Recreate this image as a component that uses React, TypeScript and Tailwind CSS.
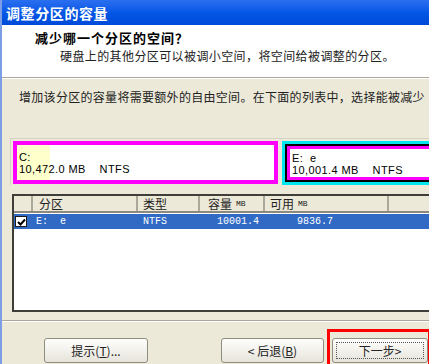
import React from 'react'

const cjk = { fontFamily: '"Noto Sans CJK SC", "Liberation Sans", sans-serif' }
const tahoma = { fontFamily: '"Liberation Sans", "Noto Sans CJK SC", sans-serif' }
const mono = { fontFamily: '"Liberation Mono", "Noto Sans CJK SC", monospace' }

function XpButton({ children, focus }: { children: React.ReactNode; focus?: boolean }) {
  return (
    <div className="flex h-[25px] w-full items-center justify-center rounded-[3px] border border-[#8f8d80] bg-gradient-to-b from-[#fefefd] to-[#e6e4da] p-[3px]">
      <div
        className={`flex h-full w-full items-center justify-center text-[12px] leading-none text-[#222] ${
          focus ? 'border border-dotted border-[#555]' : ''
        }`}
        style={cjk}
      >
        {children}
      </div>
    </div>
  )
}

export default function App() {
  return (
    <div className="h-[364px] w-[429px] overflow-hidden border-l-2 border-[#7c9ee6] bg-[#ece9d8]">
      {/* title bar */}
      <div className="flex h-[25px] items-center bg-gradient-to-b from-[#2b6ff0] via-[#0457e6] to-[#0049d8] pl-[4px]">
        <span className="text-[14px] font-bold leading-none tracking-[0.6px] text-white" style={cjk}>
          调整分区的容量
        </span>
      </div>

      {/* header */}
      <div className="h-[53px] border-b border-[#aca899] bg-white">
        <div className="pl-[33px] pt-[6px] text-[13px] font-bold leading-[14px] tracking-[1px] text-black" style={cjk}>
          减少哪一个分区的空间？
        </div>
        <div className="whitespace-nowrap pl-[58px] pt-[4px] text-[12px] leading-[14px] tracking-[0.4px] text-[#222]" style={cjk}>
          硬盘上的其他分区可以被调小空间，将空间给被调整的分区。
        </div>
      </div>
      <div className="h-px bg-white" />

      {/* body */}
      <div className="w-[480px]">
        <div className="whitespace-nowrap pl-[17px] pt-[11px] text-[12px] leading-[14px] tracking-[0.3px] text-[#222]" style={cjk}>
          增加该分区的容量将需要额外的自由空间。在下面的列表中，选择能被减少
        </div>

        {/* partition strip */}
        <div className="ml-[8px] mt-[34px] flex gap-[4px] border-l border-t border-[#d6d3c4] pl-[2px] pt-[2px]">
          <div className="h-[43px] w-[265px] border-4 border-[#ff00ff] bg-white">
            <div className="relative h-full w-full">
              <div className="absolute left-0 top-0 h-full w-[33px] bg-[#ffffcc]" />
              <div className="relative pl-[2px] pt-[6px] text-[11px] leading-[12px] tracking-[0.4px] text-black" style={tahoma}>
                <div>C:</div>
                <div className="whitespace-pre">10,472.0 MB    NTFS</div>
              </div>
            </div>
          </div>
          <div className="h-[44px] w-[200px] border-[3px] border-[#00e5ee]">
            <div className="h-full w-full border-2 border-black">
              <div className="h-full w-full border-[3px] border-[#ff00ff] bg-white pl-[2px] pt-[3px] text-[11px] leading-[12px] tracking-[0.4px] text-black" style={tahoma}>
                <div className="whitespace-pre">E:  e</div>
                <div className="whitespace-pre">10,001.4 MB    NTFS</div>
              </div>
            </div>
          </div>
        </div>

        {/* list view */}
        <div className="ml-[10px] mt-[9px] h-[118px] border-2 border-[#3f3e38] bg-white">
          <div className="flex h-[17px] border-b-2 border-[#8c8a7e] bg-[#ece9d8] text-[12px] leading-none text-[#222]" style={cjk}>
            <div className="w-[19px] border-r-2 border-[#aca899]" />
            <div className="flex w-[105px] items-center border-r-2 border-[#aca899] pl-[6px]">分区</div>
            <div className="flex w-[62px] items-center border-r-2 border-[#aca899] pl-[5px]">类型</div>
            <div className="flex w-[65px] items-center gap-[4px] border-r-2 border-[#aca899] pl-[8px]">
              容量<span className="text-[8px]" style={mono}>MB</span>
            </div>
            <div className="flex w-[124px] items-center gap-[4px] border-r-2 border-[#aca899] pl-[5px]">
              可用<span className="text-[8px]" style={mono}>MB</span>
            </div>
            <div className="flex-1" />
          </div>
          <div className="mt-[1px] flex h-[15px] items-center bg-[#316ac5] text-[10px] leading-none text-white" style={mono}>
            <div className="flex w-[19px] items-center pl-[1px]">
              <div className="flex h-[11px] w-[12px] items-center justify-center border border-[#1c1c1c] bg-white">
                <svg width="9" height="8" viewBox="0 0 9 8">
                  <path d="M1 4 L3.5 6.5 L8 1.5" stroke="#000" strokeWidth="2" fill="none" />
                </svg>
              </div>
            </div>
            <div className="w-[105px] whitespace-pre pl-[3px]">E:  e</div>
            <div className="w-[62px] pl-[5px]">NTFS</div>
            <div className="w-[65px] pl-[17px]">10001.4</div>
            <div className="w-[124px] pl-[32px]">9836.7</div>
          </div>
        </div>

        {/* separator */}
        <div className="mt-[8px] h-px w-[429px] bg-[#aca899]" />
        <div className="h-px w-[429px] bg-white" />

        {/* buttons */}
        <div className="flex h-[50px] w-[429px]">
          <div className="ml-[42px] mt-[16px] w-[104px]">
            <XpButton>
              提示(<span className="underline">T</span>)...
            </XpButton>
          </div>
          <div className="ml-[73px] mt-[16px] w-[103px]">
            <XpButton>
              &lt; 后退(<span className="underline">B</span>)
            </XpButton>
          </div>
          <div className="ml-[3px] mt-[7px] h-[40px] flex-1 border-[3px] border-[#ff0000] pl-[2px] pt-[6px]">
            <XpButton focus>下一步&gt;</XpButton>
          </div>
        </div>
      </div>
    </div>
  )
}
